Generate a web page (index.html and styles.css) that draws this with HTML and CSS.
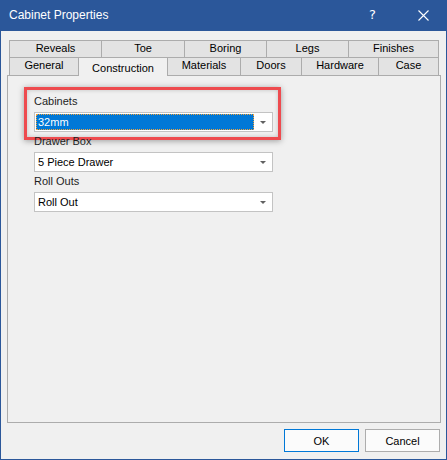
FILE: index.html
```html
<!DOCTYPE html>
<html>
<head>
<meta charset="utf-8">
<link rel="stylesheet" href="styles.css">
</head>
<body>
<div class="window">
  <div class="titlebar">
    <span class="title">Cabinet Properties</span>
    <span class="help">?</span>
    <span class="close">
      <svg width="11" height="11" viewBox="0 0 11 11"><path d="M0.5 0.5 L10.5 10.5 M10.5 0.5 L0.5 10.5" stroke="#fff" stroke-width="1.1" fill="none"/></svg>
    </span>
  </div>
  <div class="body">
    <div class="tabs">
      <div class="row row1">
        <div class="tab">Reveals</div>
        <div class="tab">Toe</div>
        <div class="tab">Boring</div>
        <div class="tab">Legs</div>
        <div class="tab">Finishes</div>
      </div>
      <div class="row row2">
        <div class="tab">General</div>
        <div class="tab active">Construction</div>
        <div class="tab">Materials</div>
        <div class="tab">Doors</div>
        <div class="tab">Hardware</div>
        <div class="tab">Case</div>
      </div>
    </div>
    <div class="panel">
      <div class="field highlighted">
        <div class="label">Cabinets</div>
        <div class="select focused">
          <span class="value"><span class="sel">32mm</span></span>
          <span class="arrow"></span>
        </div>
        <div class="annot"></div>
      </div>
      <div class="field">
        <div class="label">Drawer Box</div>
        <div class="select">
          <span class="value">5 Piece Drawer</span>
          <span class="arrow"></span>
        </div>
      </div>
      <div class="field">
        <div class="label">Roll Outs</div>
        <div class="select">
          <span class="value">Roll Out</span>
          <span class="arrow"></span>
        </div>
      </div>
    </div>
    <div class="buttons">
      <div class="btn default">OK</div>
      <div class="btn">Cancel</div>
    </div>
  </div>
</div>
</body>
</html>
```

FILE: styles.css
```css
* { box-sizing: border-box; }
html, body { margin: 0; padding: 0; }
body {
  width: 447px;
  height: 460px;
  background: #f0f0f0;
  font-family: "Liberation Sans", Arial, sans-serif;
  font-size: 11px;
  color: #000;
}
.window {
  width: 447px;
  height: 460px;
  border: 1px solid #2b579a;
  border-top: none;
  display: flex;
  flex-direction: column;
  background: #f0f0f0;
}
.titlebar {
  height: 31px;
  background: #2b579a;
  margin: 0 -1px;
  display: flex;
  align-items: center;
  color: #fff;
  padding-left: 9px;
}
.title {
  font-size: 12px;
  flex: 1;
  padding-bottom: 1px;
}
.help {
  font-family: "DejaVu Sans", sans-serif;
  font-size: 13px;
  width: 12px;
  margin-right: 37px;
  padding-bottom: 2px;
}
.close {
  display: flex;
  width: 11px;
  height: 11px;
  margin-right: 18px;
  margin-bottom: 1px;
}
.body {
  flex: 1;
  display: flex;
  flex-direction: column;
  padding: 9px 5px 7px 6px;
}
.tabs {
  padding-left: 2px;
  display: flex;
  flex-direction: column;
}
.row {
  display: grid;
}
.row1 { grid-template-columns: 92px 83px 82px 82px 91px; }
.row2 { grid-template-columns: 69px 89px 73px 61px 77px 61px; }
.tab {
  background: #e3e3e3;
  border-left: 1px solid #acacac;
  text-align: center;
  color: #000;
}
.tab:last-child { border-right: 1px solid #acacac; }
.row1 .tab {
  height: 18px;
  border-top: 1px solid #acacac;
  border-bottom: 1px solid #acacac;
  line-height: 15px;
}
.row2 .tab {
  height: 17px;
  line-height: 15px;
}
.row2 .tab.active {
  background: #f0f0f0;
  height: 18px;
  margin-bottom: -1px;
  position: relative;
  z-index: 1;
  line-height: 20px;
  border-right: 1px solid #acacac;
  margin-right: -1px;
}
.panel {
  flex: 1;
  border: 1px solid #acacac;
  background: #f0f0f0;
  padding: 17px 0 0 26px;
  display: flex;
  flex-direction: column;
  gap: 1px;
}
.field {
  width: 239px;
  display: flex;
  flex-direction: column;
  position: relative;
}
.label {
  height: 16px;
  line-height: 16px;
  margin-bottom: 3px;
  color: #1e1e1e;
}
.select {
  height: 20px;
  border: 1px solid #c3c3c3;
  background: #fff;
  display: flex;
  align-items: stretch;
  padding: 1px;
}
.value {
  flex: 1;
  display: flex;
  align-items: center;
  padding-left: 2px;
}
.focused .value { padding: 0; }
.sel {
  flex: 1;
  align-self: stretch;
  background: #0078d7;
  color: #fff;
  outline: 1px dotted #f2a33a;
  outline-offset: -1px;
  display: flex;
  align-items: center;
  padding-left: 2px;
}
.arrow {
  width: 17px;
  display: flex;
  align-items: center;
  justify-content: center;
}
.arrow::after {
  content: "";
  width: 0;
  height: 0;
  border-left: 3px solid transparent;
  border-right: 3px solid transparent;
  border-top: 3px solid #606060;
  margin-top: 1px;
}
.annot {
  position: absolute;
  top: -6px;
  left: -10px;
  right: -8px;
  bottom: -8px;
  border: 3px solid #ee4b4f;
  box-shadow: 0 1px 6px rgba(0, 0, 0, 0.35), inset 0 0 4px rgba(0, 0, 0, 0.2);
  pointer-events: none;
}
.buttons {
  display: flex;
  justify-content: flex-end;
  gap: 6px;
  padding-top: 6px;
  padding-right: 1px;
}
.btn {
  width: 75px;
  height: 23px;
  border: 1px solid #adadad;
  background: #fbfbfb;
  display: flex;
  align-items: center;
  justify-content: center;
  color: #000;
}
.btn.default {
  border-color: #0078d7;
}
```
